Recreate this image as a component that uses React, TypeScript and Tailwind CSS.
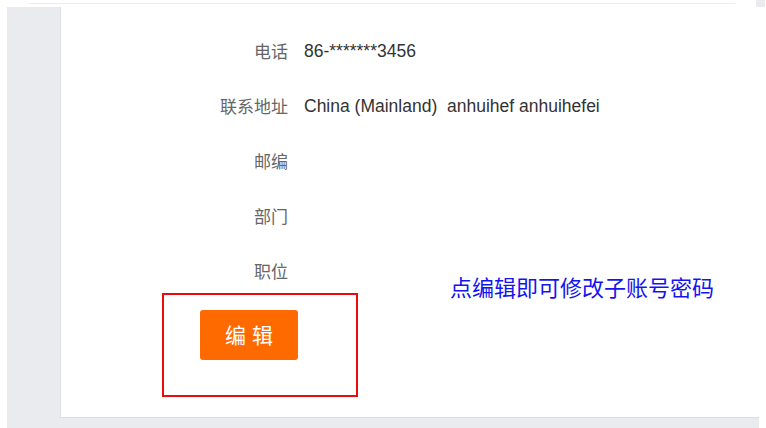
import React from "react";

const rows: { label: string; value: React.ReactNode }[] = [
  { label: "电话", value: "86-*******3456" },
  { label: "联系地址", value: "China (Mainland)\u00a0\u00a0anhuihef anhuihefei" },
  { label: "邮编", value: "" },
  { label: "部门", value: "" },
  { label: "职位", value: "" },
];

export default function App() {
  return (
    <div
      className="w-[766px] h-[428px] bg-white overflow-hidden flex flex-col"
      style={{ fontFamily: '"Liberation Sans", Arial, "Noto Sans CJK SC", sans-serif' }}
    >
      <div className="h-[7px] shrink-0 flex items-start relative">
        <div className="mt-[3px] ml-[29px] w-[706px] h-px bg-[#ececec]" />
        <div className="absolute right-px top-0 w-[9px] h-[7px] bg-[#e9ebef]" />
      </div>
      <div className="flex-1 ml-[7px] w-[752px] bg-[#e9ebef] flex flex-col">
        <div className="ml-[53px] h-[411px] bg-white border-l border-b border-[#d8dfe9] relative pt-[16px]">
          {rows.map((r) => (
            <div key={r.label} className="h-[55px] flex items-center">
              <div className="w-[227px] text-right text-[17px] text-[#666666]" style={{ fontFamily: '"Noto Sans CJK SC", sans-serif' }}>
                {r.label}
              </div>
              <div className="ml-[16px] text-[17.5px] text-[#333333] pt-px">{r.value}</div>
            </div>
          ))}
          <div className="mt-[12px] ml-[139px]">
            <button
              className="w-[98px] h-[50px] bg-[#ff6a00] rounded-[3px] text-white text-[21px] flex items-center justify-center gap-[6px]"
              style={{ fontFamily: '"Noto Sans CJK SC", sans-serif' }}
            >
              <span>编</span>
              <span>辑</span>
            </button>
          </div>
          <div className="absolute left-[101px] top-[286px] w-[196px] h-[104px] border-2 border-[#ee0a0a]" />
          <div
            className="absolute left-[389px] top-[265px] text-[22px] text-[#1414f0] leading-[28px]"
            style={{ fontFamily: '"Noto Sans CJK SC", sans-serif' }}
          >
            点编辑即可修改子账号密码
          </div>
        </div>
      </div>
    </div>
  );
}
